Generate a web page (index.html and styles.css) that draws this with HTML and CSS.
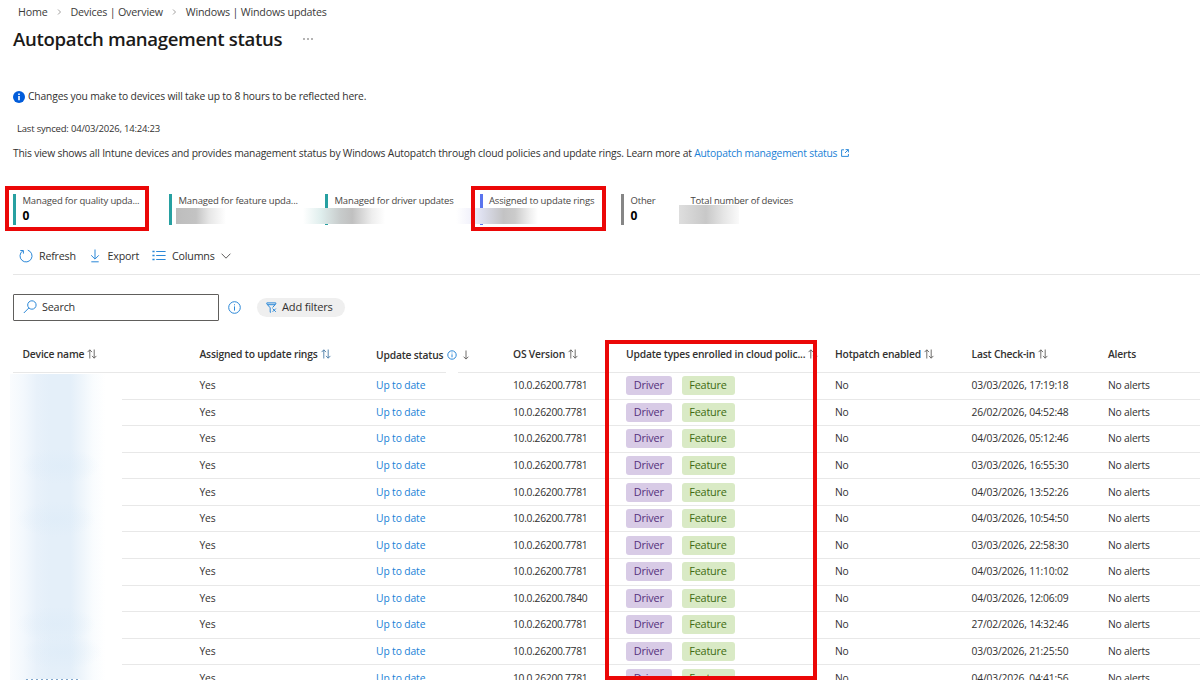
FILE: index.html
```
<!DOCTYPE html>
<html lang="en">
<head>
  <meta charset="UTF-8">
  <meta name="viewport" content="width=device-width, initial-scale=1.0">
  <title>Autopatch management status</title>
  <link rel="stylesheet" href="styles.css">
</head>
<body>
  <nav class="breadcrumb">
    <span>Home</span>
    <svg class="sep" viewBox="0 0 5 8"><path d="M1 1.5 3.5 4 1 6.5"/></svg>
    <span>Devices | Overview</span>
    <svg class="sep" viewBox="0 0 5 8"><path d="M1 1.5 3.5 4 1 6.5"/></svg>
    <span>Windows | Windows updates</span>
  </nav>
  <div class="title-row">
    <h1>Autopatch management status</h1>
    <svg class="more" viewBox="0 0 10 2"><circle cx="1" cy="1" r=".7"/><circle cx="5" cy="1" r=".7"/><circle cx="9" cy="1" r=".7"/></svg>
  </div>

  <p class="notice">
    <svg class="notice-icon" viewBox="0 0 12 12"><circle cx="6" cy="6" r="6"/><path d="M5.2 5h1.6v4.2H5.2zM5.2 2.6h1.6v1.5H5.2z"/></svg>
    <span>Changes you make to devices will take up to 8 hours to be reflected here.</span>
  </p>
  <p class="synced">Last synced: 04/03/2026, 14:24:23</p>
  <p class="intro">This view shows all Intune devices and provides management status by Windows Autopatch through cloud policies and update rings. Learn more at <a href="#">Autopatch management status</a>
    <svg class="external" viewBox="0 0 8 8"><path d="M3 .8H.6v6.6h6.8V5M4.6.6h2.8v2.8M7.3.7 4 4"/></svg>
  </p>

  <section class="kpis">
    <div class="kpi teal">
      <span class="kpi-label">Managed for quality upda...</span>
      <span class="kpi-value">0</span>
      <div class="mark mark-quality"></div>
    </div>
    <div class="kpi teal">
      <span class="kpi-label">Managed for feature upda...</span>
      <div class="smear smear-feature"></div>
    </div>
    <div class="kpi teal">
      <span class="kpi-label">Managed for driver updates</span>
      <div class="smear smear-driver"></div>
    </div>
    <div class="kpi blue">
      <span class="kpi-label">Assigned to update rings</span>
      <div class="smear smear-rings"></div>
      <div class="mark mark-rings"></div>
    </div>
    <div class="kpi grey">
      <span class="kpi-label">Other</span>
      <span class="kpi-value">0</span>
    </div>
    <div class="kpi">
      <span class="kpi-label">Total number of devices</span>
      <div class="smear smear-total"></div>
    </div>
  </section>

  <div class="toolbar">
    <span class="tool tool-refresh">
      <svg class="icon" width="14" height="14" viewBox="0 0 14 14"><path d="M3.6 2A6 6 0 1 0 8.8 1.2M1.3 1.5H4.4V4.6"/></svg>
      Refresh
    </span>
    <span class="tool tool-export">
      <svg class="icon" width="10" height="14" viewBox="0 0 10 14"><path d="M5 .5V10M1.2 6.3 5 10.1 8.8 6.3M1.3 12.8H8.7"/></svg>
      Export
    </span>
    <span class="tool tool-columns">
      <svg class="icon" width="14" height="10" viewBox="0 0 14 10"><path d="M4.2 .5H13.6M4.2 4.5H13.6M4.2 8.5H13.6"/><path class="dots" d="M.4 .5H2.6M.4 4.5H2.6M.4 8.5H2.6"/></svg>
      Columns
      <svg class="chevron" width="10" height="6" viewBox="0 0 10 6"><path d="M.6.7 5 5.2 9.4.7"/></svg>
    </span>
  </div>

  <div class="filters">
    <div class="search">
      <svg class="icon" width="14" height="14" viewBox="0 0 14 14"><circle cx="8.9" cy="5" r="4.2"/><path d="M5.8 8 .8 13"/></svg>
      Search
    </div>
    <svg class="icon info" width="13" height="13" viewBox="0 0 13 13"><circle cx="6.5" cy="6.5" r="5.8"/><path d="M6.5 5.4V9.6M6.5 3.3V4.3"/></svg>
    <div class="pill">
      <svg class="icon" width="11" height="11" viewBox="0 0 11 11"><path d="M5 10.2H4.2V5.8L.8 1.9V.9H9.8V1.9L6.6 5.5M1.6 2.7H9M6.6 6.6 9.8 9.8M9.8 6.6 6.6 9.8"/></svg>
      Add filters
    </div>
  </div>

  <section class="grid">
    <div class="row head">
      <span>Device name <i class="sort"></i></span>
      <span>Assigned to update rings <i class="sort sort-blue"></i></span>
      <span class="status-head">Update status
        <svg class="icon" width="10" height="10" viewBox="0 0 10 10"><circle cx="5" cy="5" r="4.2"/><path d="M5 4.3V7.3M5 2.6V3.4"/></svg>
        <svg class="down" width="6" height="10" viewBox="0 0 6 10"><path d="M3 .5V9M.6 6.7 3 9.1 5.4 6.7"/></svg>
      </span>
      <span>OS Version <i class="sort"></i></span>
      <span>Update types enrolled in cloud polic... <i class="sort"></i></span>
      <span>Hotpatch enabled <i class="sort"></i></span>
      <span>Last Check-in <i class="sort"></i></span>
      <span>Alerts</span>
    </div>
    <div id="rows"></div>
    <div class="names-smear"></div>
    <div class="mark mark-types"></div>
  </section>

  <script>
    const devices = [
      ['10.0.26200.7781', '03/03/2026, 17:19:18'],
      ['10.0.26200.7781', '26/02/2026, 04:52:48'],
      ['10.0.26200.7781', '04/03/2026, 05:12:46'],
      ['10.0.26200.7781', '03/03/2026, 16:55:30'],
      ['10.0.26200.7781', '04/03/2026, 13:52:26'],
      ['10.0.26200.7781', '04/03/2026, 10:54:50'],
      ['10.0.26200.7781', '03/03/2026, 22:58:30'],
      ['10.0.26200.7781', '04/03/2026, 11:10:02'],
      ['10.0.26200.7840', '04/03/2026, 12:06:09'],
      ['10.0.26200.7781', '27/02/2026, 14:32:46'],
      ['10.0.26200.7781', '03/03/2026, 21:25:50'],
      ['10.0.26200.7781', '04/03/2026, 04:41:56']
    ];

    document.getElementById('rows').innerHTML = devices.map(([version, checkin]) => `
      <div class="row">
        <span></span>
        <span>Yes</span>
        <span class="link">Up to date</span>
        <span class="version">${version}</span>
        <span class="badges"><b class="badge driver">Driver</b><b class="badge feature">Feature</b></span>
        <span>No</span>
        <span>${checkin}</span>
        <span>No alerts</span>
      </div>`).join('');

    document.querySelectorAll('.sort').forEach(el => {
      el.innerHTML = '<svg width="10" height="10" viewBox="0 0 10 10"><path d="M2.8 9.5V.9M.6 3.1 2.8.8 5 3.1M7.2.5V9.1M5 6.9 7.2 9.2 9.4 6.9"/></svg>';
    });
  </script>
</body>
</html>
```
FILE: styles.css
```
* { box-sizing: border-box; }
body {
  margin: 0;
  height: 680px;
  overflow: hidden;
  background: #fff;
  color: #323130;
  font-family: "Open Sans", "Noto Sans", sans-serif;
  font-size: 10.3px;
  letter-spacing: -0.19px;
  line-height: 14px;
}
svg { fill: none; flex: none; overflow: visible; }
p { margin: 0; }
a, .link { color: #1a7fd6; text-decoration: none; }

.breadcrumb {
  display: flex;
  align-items: center;
  height: 24px;
  padding-left: 18px;
  font-size: 10.7px;
  color: #3b3a39;
}
.sep {
  width: 5px;
  height: 8px;
  margin: 0 8.5px 0 9.5px;
  stroke: #8a8886;
  stroke-width: .8;
}
.title-row {
  display: flex;
  align-items: center;
  height: 29px;
  padding-left: 13px;
}
h1 {
  margin: 0;
  font-size: 18.6px;
  font-weight: 600;
  letter-spacing: -0.34px;
  line-height: 28px;
  color: #1b1a19;
}
.more {
  width: 10px;
  height: 2px;
  margin-left: 21px;
  fill: #323130;
}

.notice {
  display: flex;
  align-items: center;
  gap: 3px;
  margin-top: 36px;
  height: 14px;
  padding-left: 13px;
  letter-spacing: -0.16px;
}
.notice-icon { width: 12px; height: 12px; margin-top: 1px; }
.notice-icon circle { fill: #015cda; }
.notice-icon path { fill: #fff; }
.synced {
  margin-top: 19px;
  padding-left: 17px;
  height: 14px;
  font-size: 9.5px;
}
.intro {
  display: flex;
  align-items: center;
  margin-top: 10px;
  padding-left: 13px;
  height: 14px;
  letter-spacing: -0.187px;
  white-space: pre;
}
.external {
  width: 8px;
  height: 8px;
  margin-left: 4px;
  stroke: #1a7fd6;
  stroke-width: .9;
}

.kpis {
  display: grid;
  grid-template-columns: 156px 156px 154.5px 141.5px 60px 150px;
  margin-top: 34px;
  padding-left: 13px;
  height: 27px;
  font-size: 9.5px;
  letter-spacing: -0.17px;
  color: #484644;
}
.kpi {
  position: relative;
  display: flex;
  flex-direction: column;
  padding-left: 6.5px;
  border-left: 3px solid transparent;
}
.kpi.teal { border-color: #27a0a1; }
.kpi.blue { border-color: #5a74ee; }
.kpi.grey { border-color: #868686; }
.kpi-label { line-height: 13px; white-space: nowrap; }
.kpi-value {
  font-size: 12px;
  font-weight: 700;
  line-height: 18px;
  color: #000;
}

/* blurred-out values */
.smear { position: absolute; top: 14px; height: 16px; }
.smear-feature {
  left: 4px;
  width: 50px;
  background: linear-gradient(90deg, #bdbdbd, #c3c3c3 40%, #e6e6e6 66%, #fff);
}
.smear-driver {
  left: -25px;
  width: 82px;
  background: linear-gradient(90deg, #fff, #dfeeed 22%, #c8cccc 45%, #c0c0c0 60%, #eee 84%, #fff);
}
.smear-rings {
  left: -27px;
  width: 82px;
  background: linear-gradient(90deg, #fff, #f2f2fb 18%, #dddfee 32%, #c3c3c4 58%, #cbcbcb 72%, #efefef 90%, #fff);
}
.smear-total {
  top: 11px;
  left: -5px;
  width: 60px;
  height: 19px;
  background: linear-gradient(90deg, #dedede, #c8c8c8 45%, #e6e6e6 75%, #fafafa);
}

/* red highlight frames */
.mark { position: absolute; border: 4px solid #eb0707; }
.mark-quality { left: -11px; top: -8px; width: 144px; height: 45px; }
.mark-rings { left: -11.5px; top: -8px; width: 135px; height: 45px; }
.mark-types { left: 605px; top: 3px; width: 212px; height: 340px; }

.toolbar {
  display: flex;
  align-items: center;
  margin: 17px 0 0 13px;
  padding-left: 6px;
  height: 37px;
  border-bottom: 1px solid #e6e6e6;
  font-size: 10.7px;
}
.tool { display: flex; align-items: center; }
.tool-refresh { gap: 6px; width: 70.5px; }
.tool-export { gap: 8px; width: 62.5px; }
.tool-columns { gap: 6px; }
.icon { stroke: #2b88d8; stroke-width: 1; }
.icon .dots { stroke-width: 1.6; }
.chevron { stroke: #605e5c; stroke-width: 1; }

.filters {
  display: flex;
  align-items: center;
  margin-top: 18px;
  padding-left: 13px;
  height: 28px;
  font-size: 10.8px;
}
.search {
  display: flex;
  align-items: center;
  gap: 5px;
  width: 206px;
  height: 27px;
  padding-left: 9px;
  border: 1px solid #605e5c;
  border-radius: 1px;
}
.info { margin-left: 9px; }
.pill {
  display: flex;
  align-items: center;
  gap: 5px;
  width: 88px;
  height: 19px;
  margin-left: 16px;
  padding-left: 9px;
  border-radius: 10px;
  background: #efefef;
  font-size: 11.1px;
}

.grid { position: relative; margin-top: 16px; height: 343px; }
.row {
  display: grid;
  grid-template-columns: 177px 176.5px 137px 113px 209px 136.5px 136.5px 1fr;
  align-items: center;
  height: 26.58px;
  margin-left: 13px;
  border-bottom: 1px solid #e8e8e8;
}
.row > span { padding: 0 0 1px 9.5px; white-space: nowrap; }
.head { height: 36px; font-weight: 600; }
.head > span { display: flex; align-items: center; gap: 3px; }
.sort { display: flex; }
.sort svg, .down { stroke: #605e5c; stroke-width: .9; }
.sort-blue svg { stroke: #4a7ba6; }
.head > span.status-head {
  position: relative;
  gap: 4px;
  padding-bottom: 0;
}
.status-head::after {
  content: "";
  position: absolute;
  left: 79px;
  bottom: -12px;
  width: 12px;
  height: 3px;
  background: #fff;
}
.down { margin-left: 2px; }
.link { letter-spacing: -0.12px; }
.version { letter-spacing: -0.29px; }
.row > .badges { display: flex; gap: 10px; padding-bottom: 0; }
.badge {
  height: 19px;
  border-radius: 3px;
  font-size: 10.9px;
  font-weight: 400;
  line-height: 18px;
  text-align: center;
}
.driver { width: 45.5px; background: #d8cbe6; color: #55307c; }
.feature { width: 53px; background: #d9eac5; color: #3f6b12; }

/* covers the device names */
.names-smear {
  position: absolute;
  left: 10px;
  top: 37px;
  width: 112px;
  height: 306px;
  background:
    repeating-linear-gradient(90deg, #7fa6cc 0 2px, #fff 2px 5px) 16px 100% / 54px 1px no-repeat,
    radial-gradient(ellipse 40px 18px at 50px 92px, #dcebf880, #dcebf800),
    radial-gradient(ellipse 40px 18px at 46px 145px, #dcebf880, #dcebf800),
    radial-gradient(ellipse 40px 18px at 46px 250px, #dcebf880, #dcebf800),
    radial-gradient(ellipse 40px 18px at 52px 278px, #dcebf880, #dcebf800),
    linear-gradient(90deg, #fafcfe, #f3f8fd 12%, #e8f1fa 24%, #e4eff9 36%, #e4eff9 54%, #eef5fb 64%, #f9fcfe 74%, #fff 85%);
}
```
